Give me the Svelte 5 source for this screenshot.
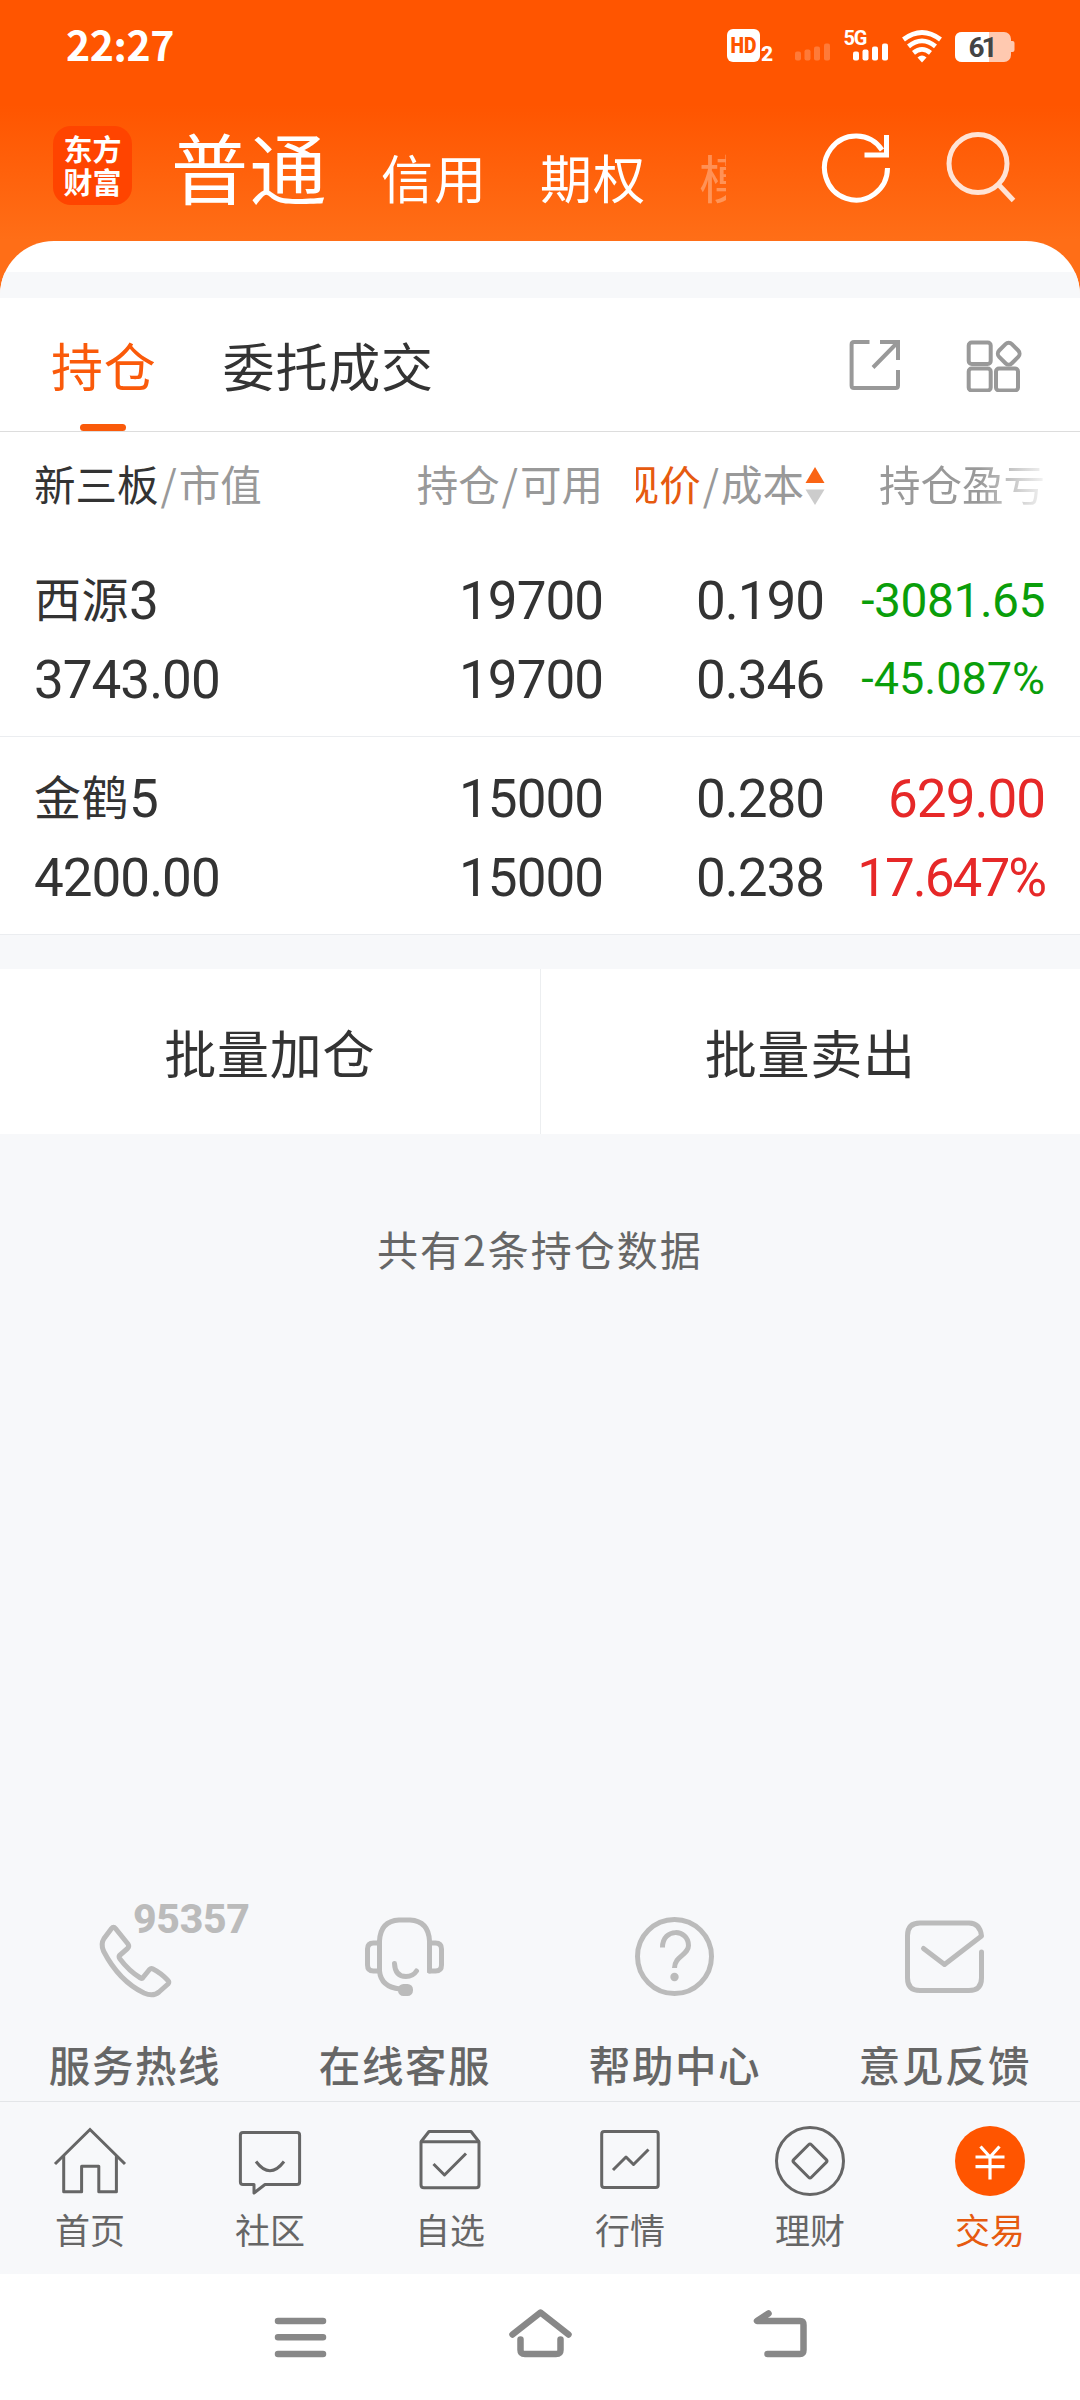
<script lang="ts">
    type Holding = {
        name : string;
        series : string;
        marketValue : string;
        held : string;
        available : string;
        price : string;
        cost : string;
        profit : string;
        percent : string;
        trend : string;
        small : boolean;
    };

    const holdings : Holding[] = [
        { name: "西源", series: "3", marketValue: "3743.00", held: "19700", available: "19700", price: "0.190", cost: "0.346", profit: "-3081.65", percent: "-45.087%", trend: "down", small: true },
        { name: "金鹤", series: "5", marketValue: "4200.00", held: "15000", available: "15000", price: "0.280", cost: "0.238", profit: "629.00", percent: "17.647%", trend: "up", small: false },
    ];

    const services = [
        { id: "phone", label: "服务热线" },
        { id: "headset", label: "在线客服" },
        { id: "help", label: "帮助中心" },
        { id: "mail", label: "意见反馈" },
    ];

    const navItems = [
        { id: "home", label: "首页" },
        { id: "community", label: "社区" },
        { id: "watchlist", label: "自选" },
        { id: "market", label: "行情" },
        { id: "wealth", label: "理财" },
        { id: "trade", label: "交易" },
    ];

    let currentNav = "trade";
</script>

<div class="screen">
    <header class="top">
        <div class="statusBar">
            <span class="time">22:27</span>
            <svg class="statusIcons" width="300" height="40" viewBox="0 0 300 40">
                <rect x="7" y="3" width="33" height="33" rx="6" fill="#fff"/>
                <text class="hd" x="10.5" y="27" textLength="26" lengthAdjust="spacingAndGlyphs">HD</text>
                <text class="sim" x="41" y="35">2</text>
                <g fill="#fff" opacity="0.22">
                    <rect x="75" y="25.5" width="6" height="9" rx="2"/>
                    <rect x="84.5" y="23.5" width="6" height="11" rx="2"/>
                    <rect x="94" y="20.5" width="6" height="14" rx="2"/>
                    <rect x="104" y="17.5" width="6" height="17" rx="2"/>
                </g>
                <text class="network" x="123.5" y="18.5" textLength="24">5G</text>
                <g fill="#fff">
                    <rect x="133" y="25.5" width="6" height="9" rx="2"/>
                    <rect x="142.5" y="23.5" width="6" height="11" rx="2"/>
                    <rect x="152" y="20.5" width="6" height="14" rx="2"/>
                    <rect x="162" y="17.5" width="6" height="17" rx="2"/>
                </g>
                <g fill="none" stroke="#fff" stroke-width="4.8">
                    <path d="M183.500 13.500 Q202 -0.500 220.500 13.500"/>
                    <path d="M188.500 20.300 Q202 9.500 215.500 20.300"/>
                    <path d="M193.500 26.800 Q202 20 210.500 26.800"/>
                </g>
                <path d="M197.500 31.500 Q202 27.500 206.500 31.500 L202 36.500 Z" fill="#fff"/>
                <rect x="235" y="6" width="56" height="30" rx="7" fill="#ffc9b0"/>
                <path d="M291 15 h1.500 q2 0 2 2 v7 q0 2 -2 2 h-1.500 z" fill="#ffc9b0"/>
                <path d="M242 6 H269 V36 H242 Q235 36 235 29 V13 Q235 6 242 6 Z" fill="#fff"/>
                <text class="battery" x="248.500" y="31" textLength="29">61</text>
            </svg>
        </div>
        <div class="titleBar">
            <div class="logo"><span>东方</span><span>财富</span></div>
            <nav class="accounts">
                <span class="account current">普通</span>
                <span class="account">信用</span>
                <span class="account">期权</span>
                <span class="account cut">模</span>
            </nav>
            <div class="tools">
                <svg width="76" height="76" viewBox="0 0 76 76" fill="none" stroke="#fff" stroke-width="5">
                    <path d="M69.500 39 A31.500 32 0 1 1 64 21"/>
                    <path d="M68.500 6 V26 H46.500"/>
                </svg>
                <svg width="76" height="76" viewBox="0 0 76 76" fill="none" stroke="#ffe3d5" stroke-width="5">
                    <circle cx="35" cy="34.500" r="29"/>
                    <path d="M55 55 L70.500 71.500"/>
                </svg>
            </div>
        </div>
    </header>

    <main class="sheet">
        <div class="strip"></div>

        <div class="tabs">
            <div class="tab active">持仓</div>
            <div class="tab">委托成交</div>
            <div class="tabTools">
                <svg width="54" height="54" viewBox="0 0 54 54" fill="none" stroke="#999" stroke-width="4">
                    <path d="M21.500 4 H6 Q3.600 4 3.600 6.500 V47.500 Q3.600 50 6 50 H47.500 Q50 50 50 47.500 V32"/>
                    <path d="M32 4 H50 V22 M49 5 L25 29.500"/>
                </svg>
                <svg width="58" height="54" viewBox="0 0 58 54" fill="none" stroke="#999" stroke-width="4">
                    <rect x="3.700" y="4.500" width="22" height="21.500" rx="3"/>
                    <rect x="3.700" y="30.500" width="22" height="22" rx="3"/>
                    <rect x="31" y="30.500" width="22" height="22" rx="3"/>
                    <rect x="34.700" y="6.700" width="18" height="18" rx="4.500" transform="rotate(45 43.700 15.700)"/>
                </svg>
            </div>
        </div>

        <div class="row columns">
            <div class="left"><b>新三板</b><i>/</i>市值</div>
            <div>持仓<i>/</i>可用</div>
            <div class="sorted">
                <div class="sortLabel"><em>现价</em><i>/</i>成本</div>
                <svg width="20" height="38" viewBox="0 0 20 38">
                    <path d="M10 0 L19.500 16 H0.500 Z" fill="#fa6414"/>
                    <path d="M10 38 L19.500 22.500 H0.500 Z" fill="#ccc"/>
                </svg>
            </div>
            <div class="fading">持仓盈亏</div>
        </div>

        {#each holdings as item}
            <div class="row holding">
                <div class="left"><span class="name">{item.name}</span>{item.series}</div>
                <div>{item.held}</div>
                <div>{item.price}</div>
                <div class={item.trend} class:small={item.small}>{item.profit}</div>
                <div class="left">{item.marketValue}</div>
                <div>{item.available}</div>
                <div>{item.cost}</div>
                <div class={item.trend} class:small={item.small} class:percent={true}>{item.percent}</div>
            </div>
        {/each}

        <div class="batch">
            <button>批量加仓</button>
            <button>批量卖出</button>
        </div>

        <p class="count">共有2条持仓数据</p>
    </main>

    <section class="services">
        {#each services as service}
            <div class="service">
                <svg width="90" height="90" viewBox="0 0 90 90" fill="none" stroke="#bbb" stroke-width="5" stroke-linecap="round" stroke-linejoin="round">
                    {#if service.id == "phone"}
                        <path d="M21.500 16.500 Q23.500 14 25.500 16.500 L38 32 Q39.500 34.500 37.500 36.500 L29.500 43.500 Q28.500 45 30 47 Q39 59 50.500 66 Q52 67 53 65.500 L59.500 57.500 Q61 56 63 57 Q71 61 78 68.500 Q79.500 70 78 72 L69 80 Q63 85 54 81 Q29 69 13.500 39 Q10.500 32 14 26.500 Z"/>
                    {:else if service.id == "headset"}
                        <path d="M69.500 59 V29 Q68.500 9 50 8 H39 Q20.500 9 19.500 29 V59 Q21 75 40 77"/>
                        <path d="M19.500 31 H13.500 Q7.500 31 7.500 37 V53 Q7.500 59 13.500 59 H19.500 M69.500 31 H75.500 Q81.500 31 81.500 37 V53 Q81.500 59 75.500 59 H69.500"/>
                        <path d="M34.500 51.500 Q35 64.500 46 64.500 Q53 64.500 56.500 59"/>
                        <rect x="40.500" y="74.500" width="10" height="7" rx="3" fill="#bbb"/>
                    {:else if service.id == "help"}
                        <circle cx="44.500" cy="44.500" r="37"/>
                        <path d="M32.500 35.500 C32.500 15.500 58.500 16.500 58.500 33.500 C58.500 43 44.500 44 44.500 56" stroke-linecap="butt"/>
                        <circle cx="44.500" cy="65" r="4.200" fill="#bbb" stroke="none"/>
                    {:else}
                        <path d="M81.500 40 V66 Q81.500 78.500 69 78.500 H20 Q7.500 78.500 7.500 66 V23.500 Q7.500 11 20 11 H69 Q80 11 81.500 24 L44.500 52.500 L23.500 36.500"/>
                    {/if}
                </svg>
                {#if service.id == "phone"}
                    <span class="hotline">95357</span>
                {/if}
                <span>{service.label}</span>
            </div>
        {/each}
    </section>

    <nav class="bottomNav">
        {#each navItems as item}
            <div class="navItem" class:selected={item.id == currentNav}>
                <svg width="80" height="78" viewBox="0 0 80 78" fill="none" stroke="#666" stroke-width="3" stroke-linejoin="round">
                    {#if item.id == "home"}
                        <path d="M5 42 L40 7.500 L75 42" stroke-linejoin="miter"/>
                        <path d="M13.700 34 V69.700 H31.600 V44.300 H48.800 V69.700 H66.400 V34"/>
                    {:else if item.id == "community"}
                        <path d="M13 10.500 H67 Q69.600 10.500 69.600 13 V60 Q69.600 62.500 67 62.500 H35 L24 71 V62.500 H13 Q10.400 62.500 10.400 60 V13 Q10.400 10.500 13 10.500 Z"/>
                        <path d="M26 39.500 Q40 58 54 39.500"/>
                    {:else if item.id == "watchlist"}
                        <path d="M11 19.700 H69 V63 Q69 65.700 66 65.700 H14 Q11 65.700 11 63 Z"/>
                        <path d="M11 19.700 L19 9.500 H61 L69 19.700"/>
                        <path d="M23.500 42 L34.500 53 L56 31.500"/>
                    {:else if item.id == "market"}
                        <rect x="11.700" y="9.500" width="56.500" height="56" rx="2.500"/>
                        <path d="M23 48 L36 35 L43.500 42.500 L58.500 27.500"/>
                    {:else if item.id == "wealth"}
                        <circle cx="40" cy="39" r="33.500"/>
                        <rect x="27.500" y="26.500" width="25" height="25" rx="2" transform="rotate(45 40 39)"/>
                    {:else}
                        <circle cx="40" cy="39" r="35" fill="#ff5500" stroke="none"/>
                        <path d="M30.500 24.500 L40 35 L49.500 24.500 M40 35 V57.500 M25.500 35 H54.500 M25.500 44.700 H54.500" stroke="#fff" stroke-width="3.200"/>
                    {/if}
                </svg>
                <span>{item.label}</span>
            </div>
        {/each}
    </nav>

    <div class="systemNav">
        <svg width="70" height="60" viewBox="0 0 70 60">
            <path d="M13 17 H58 M13 33.300 H58 M13 50 H58"/>
        </svg>
        <svg width="70" height="60" viewBox="0 0 70 60">
            <path d="M7.500 30.500 L35.500 8.500 L63.500 30.500 M15.500 35.500 V46 Q15.500 50 20 50 H51 Q55.500 50 55.500 46 V35.500"/>
        </svg>
        <svg width="70" height="60" viewBox="0 0 70 60">
            <path d="M23.500 9.500 L12 17 H55 Q58.500 17 58.500 21 V46 Q58.500 50 55 50 H22.500"/>
        </svg>
    </div>
</div>

<style>
    :global(body) {
        background-color: #f7f8fa;
    }

    .screen {
        width: 1080px;
        height: 2400px;
        display: flex;
        flex-direction: column;
        overflow: hidden;
        background-color: #f7f8fa;
        color: #333;
        font-family: "Noto Sans CJK SC", sans-serif;
    }

    .top {
        height: 301px;
        margin-bottom: -60px;
        flex-shrink: 0;
        background: linear-gradient(#ff5500 105px, #ff6e17 240px);
        color: white;
    }

    .statusBar {
        display: flex;
        justify-content: space-between;
        height: 92px;
        padding: 0 60px 0 66px;
    }

    .time {
        font-size: 41px;
        font-weight: 700;
        letter-spacing: -0.4px;
        line-height: 86px;
    }

    .statusIcons {
        margin-top: 26px;
        font-family: Roboto, sans-serif;
        font-weight: 700;
    }

    .hd {
        font-size: 22px;
        font-weight: 900;
        fill: #ff5500;
    }

    .sim {
        font-size: 21px;
        font-weight: 800;
        fill: white;
    }

    .network {
        font-size: 20px;
        fill: white;
    }

    .battery {
        font-size: 28px;
        fill: #444;
    }

    .titleBar {
        display: flex;
        height: 149px;
        padding-left: 53px;
    }

    .logo {
        display: flex;
        flex-direction: column;
        align-items: center;
        justify-content: center;
        width: 79px;
        height: 79px;
        margin-top: 34px;
        border-radius: 18px;
        background-color: #ff4400;
        font-size: 29px;
        font-weight: 700;
        line-height: 33px;
        padding-bottom: 2px;
        box-sizing: border-box;
    }

    .accounts {
        display: flex;
        align-items: baseline;
        width: 595px;
        padding-left: 39px;
        line-height: 148px;
        white-space: nowrap;
        overflow: hidden;
    }

    .account {
        font-size: 52px;
        letter-spacing: 1px;
        margin-right: 53px;
    }

    .account.current {
        font-size: 77px;
        letter-spacing: 1.5px;
        margin-right: 53px;
    }

    .account.cut {
        width: 27px;
        margin-right: 0;
        overflow: hidden;
        opacity: 0.3;
    }

    .tools {
        display: flex;
        gap: 49px;
        margin-top: 37px;
        margin-left: 52px;
    }

    .sheet {
        border-radius: 54px 54px 0 0;
        overflow: hidden;
        background-color: white;
    }

    .strip {
        height: 26px;
        margin-top: 31px;
        background-color: #f7f8fa;
    }

    .tabs {
        display: flex;
        height: 133px;
        padding-left: 51px;
        border-bottom: 1px solid #ddd;
    }

    .tab {
        position: relative;
        margin-right: 66px;
        font-size: 52px;
        letter-spacing: 0.8px;
        line-height: 133px;
    }

    .tab.active {
        color: #fa5a0a;
    }

    .tab.active::after {
        content: "";
        position: absolute;
        left: 29px;
        bottom: 0;
        width: 46px;
        height: 7px;
        border-radius: 4px;
        background-color: #fa5a0a;
    }

    .tabTools {
        display: flex;
        gap: 63px;
        margin: 40px 57px 0 auto;
    }

    .row {
        display: grid;
        grid-template-columns: 300px 269px 221px 221px;
        padding-left: 34px;
        text-align: right;
        white-space: nowrap;
    }

    .left {
        text-align: left;
    }

    .columns {
        height: 107px;
        font-size: 41.5px;
        line-height: 103px;
        color: #999;
    }

    .columns b {
        font-weight: 400;
        color: #333;
    }

    .columns i {
        font-style: normal;
        padding: 0 2px;
    }

    .columns em {
        font-style: normal;
        color: #e65a0f;
    }

    .sorted {
        display: flex;
        align-items: flex-start;
        justify-content: flex-end;
    }

    .sorted svg {
        margin: 35px -1px 0 0;
    }

    /* the label is wider than its column, so its start is cut off */
    .sortLabel {
        display: flex;
        justify-content: flex-end;
        width: 168px;
        margin-right: 1px;
        overflow: hidden;
    }

    .fading {
        background: linear-gradient(90deg, #999 155px, #f4f4f4 221px);
        background-clip: text;
        -webkit-background-clip: text;
        color: transparent;
    }

    .holding {
        height: 198px;
        padding-top: 23px;
        box-sizing: border-box;
        grid-template-rows: 79px 79px;
        border-bottom: 1px solid #ebedf0;
        font-family: Roboto, sans-serif;
        font-size: 53px;
        line-height: 79px;
        letter-spacing: -1px;
    }

    .name {
        font-family: "Noto Sans CJK SC", sans-serif;
        font-size: 47px;
        line-height: 1;
        letter-spacing: 0.5px;
        vertical-align: 2px;
    }

    .down {
        color: #0a9e0a;
    }

    .up {
        color: #e62828;
    }

    .small {
        font-size: 48px;
        line-height: 77px;
        letter-spacing: -0.5px;
    }

    .percent {
        letter-spacing: -2px;
    }

    .small.percent {
        font-size: 45px;
        line-height: 75px;
        letter-spacing: 0;
    }

    .batch {
        display: flex;
        height: 165px;
        border-top: 34px solid #f7f8fa;
    }

    .batch button {
        flex: 1;
        padding: 0;
        border: 0;
        border-right: 1px solid #eceef0;
        background: none;
        color: inherit;
        font: inherit;
        font-size: 52px;
        letter-spacing: 0.8px;
    }

    .batch button + button {
        border-right: 0;
    }

    .count {
        height: 230px;
        margin: 0;
        background-color: #f7f8fa;
        color: #666;
        font-size: 41px;
        letter-spacing: 2px;
        line-height: 229px;
        text-align: center;
    }

    .services {
        display: flex;
        margin-top: auto;
        height: 189px;
        flex-shrink: 0;
    }

    .service {
        position: relative;
        display: flex;
        flex-direction: column;
        align-items: center;
        width: 270px;
        color: #666;
        font-size: 41.5px;
        font-weight: 500;
        letter-spacing: 1.6px;
        line-height: 60px;
        gap: 32px;
    }

    .service .hotline {
        position: absolute;
        left: 133px;
        top: -23px;
        color: #bbb;
        font-family: Roboto, sans-serif;
        font-size: 41px;
        font-weight: 800;
        letter-spacing: -0.3px;
    }

    .bottomNav {
        display: flex;
        height: 172px;
        flex-shrink: 0;
        border-top: 1px solid #e3e5e8;
    }

    .navItem {
        display: flex;
        flex-direction: column;
        align-items: center;
        width: 180px;
        padding-top: 20px;
        color: #666;
        font-size: 35px;
        line-height: 58px;
    }

    .navItem.selected {
        color: #e65a0f;
    }

    .systemNav {
        display: flex;
        justify-content: center;
        gap: 170px;
        height: 126px;
        padding-top: 30px;
        box-sizing: border-box;
        flex-shrink: 0;
        background-color: white;
    }

    .systemNav path {
        fill: none;
        stroke: #888;
        stroke-width: 6.5px;
        stroke-linecap: round;
        stroke-linejoin: round;
    }
</style>
